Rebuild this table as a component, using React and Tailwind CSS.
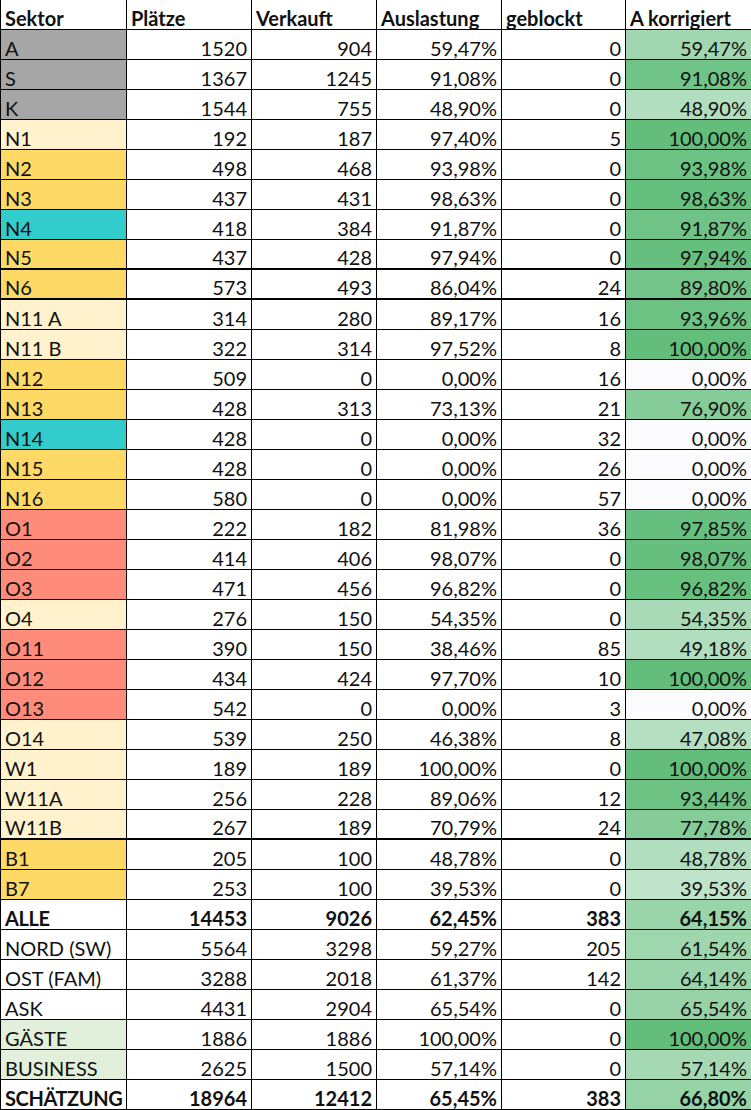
const fills = {
  gray: 'bg-[#a6a6a6]',
  light: 'bg-[#fff2cc]',
  gold: 'bg-[#ffd966]',
  teal: 'bg-[#33cccc]',
  salmon: 'bg-[#ff8b7b]',
  mint: 'bg-[#e2efda]',
  none: 'bg-white',
};

// sektor, plätze, verkauft, auslastung, geblockt, korrigiert, fill, bold, thick bottom line
const rows = [
  ['A', 1520, 904, '59,47%', 0, '59,47%', 'gray'],
  ['S', 1367, 1245, '91,08%', 0, '91,08%', 'gray'],
  ['K', 1544, 755, '48,90%', 0, '48,90%', 'gray'],
  ['N1', 192, 187, '97,40%', 5, '100,00%', 'light'],
  ['N2', 498, 468, '93,98%', 0, '93,98%', 'gold'],
  ['N3', 437, 431, '98,63%', 0, '98,63%', 'gold'],
  ['N4', 418, 384, '91,87%', 0, '91,87%', 'teal'],
  ['N5', 437, 428, '97,94%', 0, '97,94%', 'gold', false, true],
  ['N6', 573, 493, '86,04%', 24, '89,80%', 'gold', false, true],
  ['N11 A', 314, 280, '89,17%', 16, '93,96%', 'light'],
  ['N11 B', 322, 314, '97,52%', 8, '100,00%', 'light'],
  ['N12', 509, 0, '0,00%', 16, '0,00%', 'gold'],
  ['N13', 428, 313, '73,13%', 21, '76,90%', 'gold'],
  ['N14', 428, 0, '0,00%', 32, '0,00%', 'teal'],
  ['N15', 428, 0, '0,00%', 26, '0,00%', 'gold'],
  ['N16', 580, 0, '0,00%', 57, '0,00%', 'gold'],
  ['O1', 222, 182, '81,98%', 36, '97,85%', 'salmon'],
  ['O2', 414, 406, '98,07%', 0, '98,07%', 'salmon'],
  ['O3', 471, 456, '96,82%', 0, '96,82%', 'salmon'],
  ['O4', 276, 150, '54,35%', 0, '54,35%', 'light'],
  ['O11', 390, 150, '38,46%', 85, '49,18%', 'salmon'],
  ['O12', 434, 424, '97,70%', 10, '100,00%', 'salmon'],
  ['O13', 542, 0, '0,00%', 3, '0,00%', 'salmon'],
  ['O14', 539, 250, '46,38%', 8, '47,08%', 'light'],
  ['W1', 189, 189, '100,00%', 0, '100,00%', 'light'],
  ['W11A', 256, 228, '89,06%', 12, '93,44%', 'light'],
  ['W11B', 267, 189, '70,79%', 24, '77,78%', 'light', false, true],
  ['B1', 205, 100, '48,78%', 0, '48,78%', 'gold'],
  ['B7', 253, 100, '39,53%', 0, '39,53%', 'gold'],
  ['ALLE', 14453, 9026, '62,45%', 383, '64,15%', 'none', true],
  ['NORD (SW)', 5564, 3298, '59,27%', 205, '61,54%', 'none'],
  ['OST (FAM)', 3288, 2018, '61,37%', 142, '64,14%', 'none'],
  ['ASK', 4431, 2904, '65,54%', 0, '65,54%', 'none'],
  ['GÄSTE', 1886, 1886, '100,00%', 0, '100,00%', 'mint'],
  ['BUSINESS', 2625, 1500, '57,14%', 0, '57,14%', 'mint'],
  ['SCHÄTZUNG', 18964, 12412, '65,45%', 383, '66,80%', 'none', true],
];

// Excel-style 2-colour scale: white (0%) -> green (100%)
function scale(pct) {
  const t = Math.min(1, Math.max(0, parseFloat(pct.replace(',', '.')) / 100));
  const lo = [252, 252, 255];
  const hi = [99, 190, 123];
  const c = lo.map((v, i) => Math.round(v + (hi[i] - v) * t));
  return `rgb(${c[0]}, ${c[1]}, ${c[2]})`;
}

const grid = 'grid grid-cols-[126px_125px_125px_125px_124px_126px] border-l border-black';
const cell = 'flex items-end px-[4px] border-r border-black leading-[22px] whitespace-nowrap';

function Row({ r }) {
  const [name, seats, sold, load, blocked, corr, fill, bold, thick] = r;
  const line = thick ? 'border-b-2' : 'border-b';
  return (
    <div className={`${grid} h-[30px] ${line} border-b-black ${bold ? 'font-bold' : ''}`}>
      <div className={`${cell} ${fills[fill]} ${bold ? 'tracking-[-0.4px]' : ''}`}>{name}</div>
      <div className={`${cell} justify-end`}>{seats}</div>
      <div className={`${cell} justify-end`}>{sold}</div>
      <div className={`${cell} justify-end`}>{load}</div>
      <div className={`${cell} justify-end`}>{blocked}</div>
      <div className={`${cell} justify-end`} style={{ backgroundColor: scale(corr) }}>
        {corr}
      </div>
    </div>
  );
}

export default function App() {
  const head = ['Sektor', 'Plätze', 'Verkauft', 'Auslastung', 'geblockt', 'A korrigiert'];
  return (
    <div className="w-[751px] bg-white text-[#111] text-[20px] font-['Lato',sans-serif]">
      <div className={`${grid} h-[30px] border-b border-b-black font-bold`}>
        {head.map((h) => (
          <div key={h} className={cell}>{h}</div>
        ))}
      </div>
      {rows.map((r) => (
        <Row key={r[0]} r={r} />
      ))}
    </div>
  );
}
